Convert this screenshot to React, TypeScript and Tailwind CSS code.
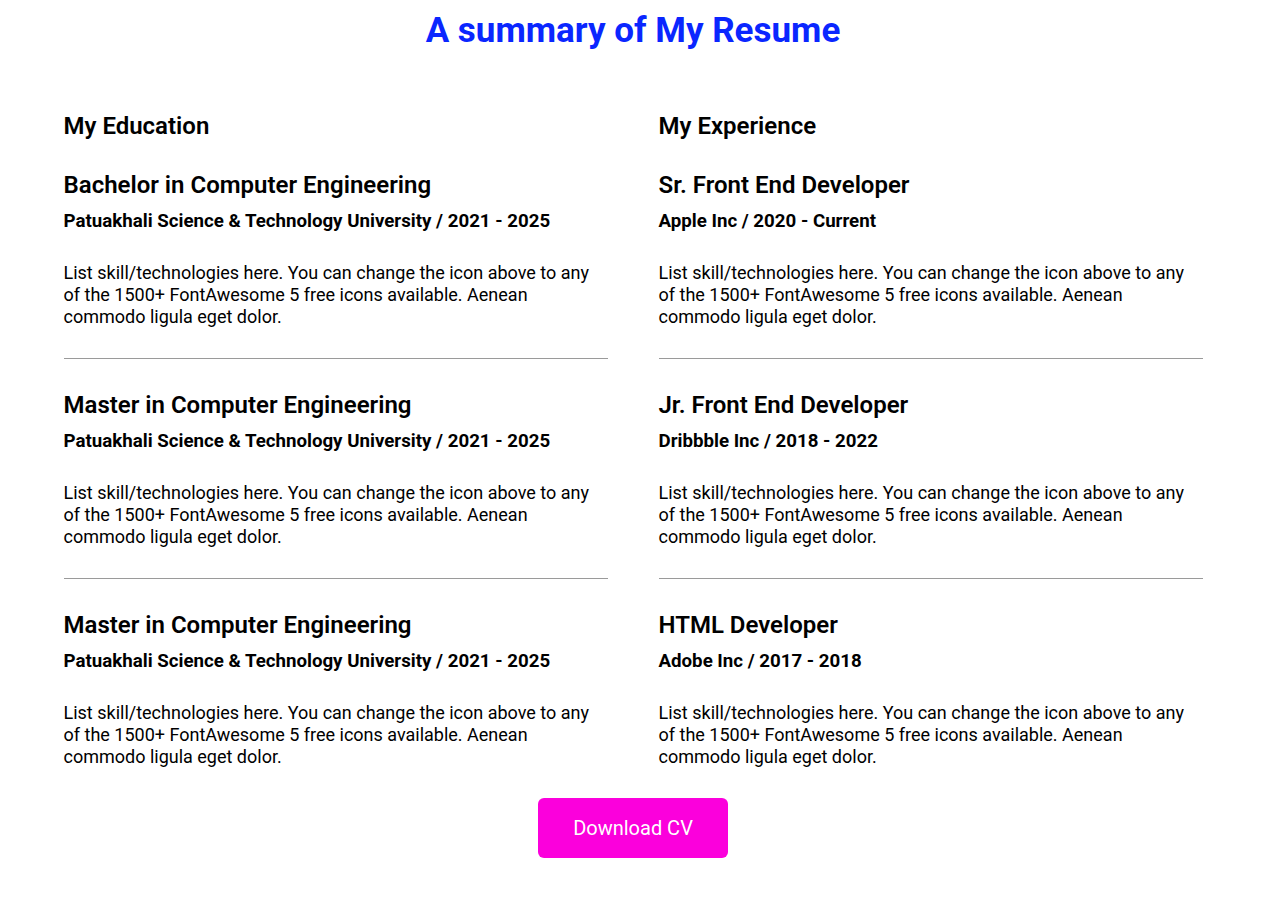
import React from "react";

type Entry = { title: string; place: string };

const education: Entry[] = [
  { title: "Bachelor in Computer Engineering", place: "Patuakhali Science & Technology University / 2021 - 2025" },
  { title: "Master in Computer Engineering", place: "Patuakhali Science & Technology University / 2021 - 2025" },
  { title: "Master in Computer Engineering", place: "Patuakhali Science & Technology University / 2021 - 2025" },
];

const experience: Entry[] = [
  { title: "Sr. Front End Developer", place: "Apple Inc / 2020 - Current" },
  { title: "Jr. Front End Developer", place: "Dribbble Inc / 2018 - 2022" },
  { title: "HTML Developer", place: "Adobe Inc / 2017 - 2018" },
];

const blurb =
  "List skill/technologies here. You can change the icon above to any of the 1500+ FontAwesome 5 free icons available. Aenean commodo ligula eget dolor.";

const Column: React.FC<{ heading: string; items: Entry[] }> = ({ heading, items }) => {
  return (
    <div>
      <h2 className="text-[24px] leading-[28px] font-semibold">{heading}</h2>
      {items.map((item, i) => (
        <div key={i}>
          <h3 className={`${i === 0 ? "mt-[31px]" : "mt-[32px]"} text-[24px] leading-[28px] font-semibold`}>
            {item.title}
          </h3>
          <h4 className="mt-[11px] text-[18.7px] leading-[22px] font-bold">{item.place}</h4>
          <p className="mt-[30px] text-[18px] leading-[22px] pr-4">{blurb}</p>
          {i < items.length - 1 && <hr className="mt-[30px] border-t border-[#9a9a9a]" />}
        </div>
      ))}
    </div>
  );
};

const App: React.FC = () => {
  return (
    <div className="min-h-[905px] bg-white text-black font-['Roboto',sans-serif]">
      <h1 className="pt-[9px] text-center text-[35px] leading-[44px] font-bold text-[#0a26ff]">
        A summary of My Resume
      </h1>
      <div className="mx-auto mt-[59px] grid w-[1139px] grid-cols-2 gap-[51px]">
        <Column heading="My Education" items={education} />
        <Column heading="My Experience" items={experience} />
      </div>
      <div className="mt-[30px] flex justify-center">
        <button className="h-[60px] w-[190px] rounded-md bg-[#fb00dc] text-[20px] text-white">
          Download CV
        </button>
      </div>
    </div>
  );
};

export default App;
